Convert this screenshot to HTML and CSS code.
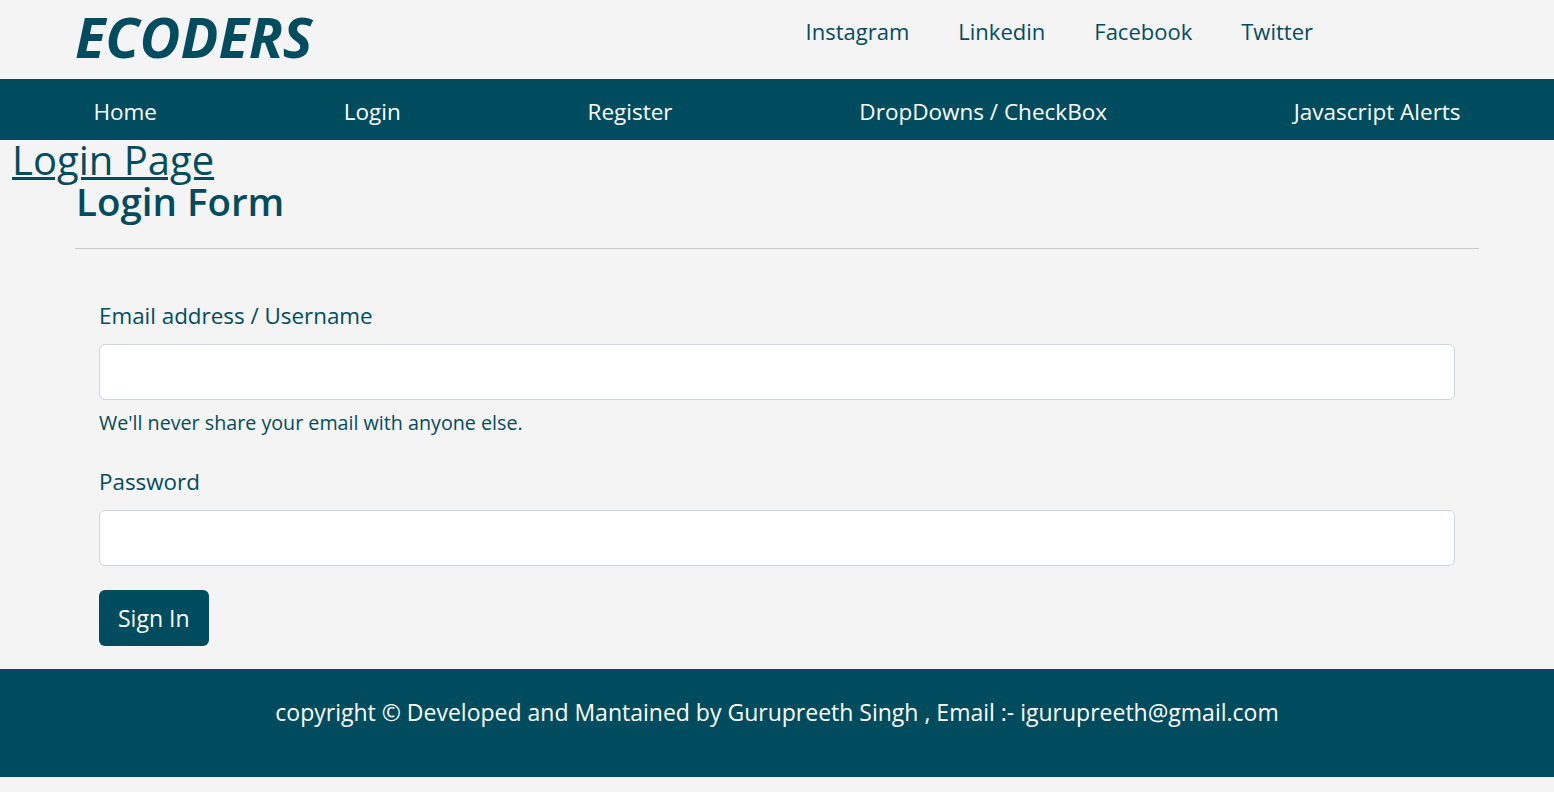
FILE: index.html
```html
<!DOCTYPE html>
<html lang="en">
<head>
<meta charset="utf-8">
<title>Login Page</title>
<link rel="stylesheet" href="styles.css">
</head>
<body>
<header class="topbar">
  <div class="logo">ECODERS</div>
  <ul class="social">
    <li><a href="#">Instagram</a></li>
    <li><a href="#">Linkedin</a></li>
    <li><a href="#">Facebook</a></li>
    <li><a href="#">Twitter</a></li>
  </ul>
</header>
<nav class="mainnav">
  <a href="#">Home</a>
  <a href="#">Login</a>
  <a href="#">Register</a>
  <a href="#">DropDowns / CheckBox</a>
  <a href="#">Javascript Alerts</a>
</nav>
<main>
  <a class="page-link" href="#">Login Page</a>
  <div class="container">
    <h1 class="form-title">Login Form</h1>
    <hr class="divider">
    <form class="login-form">
      <div class="field">
        <label class="label">Email address / Username</label>
        <input class="input" type="text">
        <small class="help">We'll never share your email with anyone else.</small>
      </div>
      <div class="field">
        <label class="label">Password</label>
        <input class="input" type="password">
      </div>
      <button class="btn" type="button">Sign In</button>
    </form>
  </div>
</main>
<footer class="footer">
  <p>copyright © Developed and Mantained by Gurupreeth Singh , Email :- igurupreeth@gmail.com</p>
</footer>
</body>
</html>
```
FILE: styles.css
```css
* { box-sizing: border-box; }
html, body { margin: 0; padding: 0; }
body {
  background: #f4f4f4;
  font-family: "Open Sans", "Noto Sans", sans-serif;
  color: #024c5f;
}
a { color: #024c5f; text-decoration: none; }

.topbar {
  height: 79px;
  display: flex;
  align-items: center;
  justify-content: space-between;
  padding: 0 241px 0 75px;
}
.logo {
  font-size: 56px;
  font-weight: 700;
  font-style: italic;
  line-height: 1;
  margin-top: -8px;
}
.social {
  list-style: none;
  display: flex;
  gap: 49px;
  margin: 0 0 17px;
  padding: 0;
}
.social a { font-size: 22px; }

.mainnav {
  height: 61px;
  padding-top: 3px;
  background: #004c5f;
  display: flex;
  justify-content: space-around;
  align-items: center;
}
.mainnav a {
  color: #fff;
  font-size: 22.5px;
}

.page-link {
  display: inline-block;
  margin-left: 12px;
  font-size: 40px;
  line-height: 40px;
  text-decoration: underline;
  text-decoration-thickness: 3px;
  text-underline-offset: 2px;
}
.container { padding: 0 75px; }
.form-title {
  margin: 0;
  padding-left: 1px;
  font-size: 38.5px;
  font-weight: 600;
  line-height: 42px;
}
.divider {
  border: 0;
  border-top: 1px solid #c9c9c9;
  margin: 26px 0 0;
}
.login-form { padding: 52px 24px 0; }
.field { margin-bottom: 24px; }
.label {
  display: block;
  font-size: 22.4px;
  line-height: 30px;
  margin-bottom: 13px;
}
.input {
  display: block;
  width: 100%;
  height: 56px;
  border: 1px solid #ced4da;
  border-radius: 6px;
  background: #fff;
  font-size: 20px;
}
.help {
  display: block;
  font-size: 19.7px;
  line-height: 24px;
  margin-top: 11px;
  padding-bottom: 8px;
}
.btn {
  display: block;
  height: 56px;
  padding: 0 19px;
  border: 0;
  border-radius: 6px;
  background: #004c5f;
  color: #fff;
  font-family: inherit;
  font-size: 23px;
}
.footer {
  margin-top: 23px;
  height: 108px;
  background: #004c5f;
  color: #fff;
  text-align: center;
  padding-top: 28px;
}
.footer p {
  margin: 0;
  font-size: 23px;
  line-height: 31px;
}
```
